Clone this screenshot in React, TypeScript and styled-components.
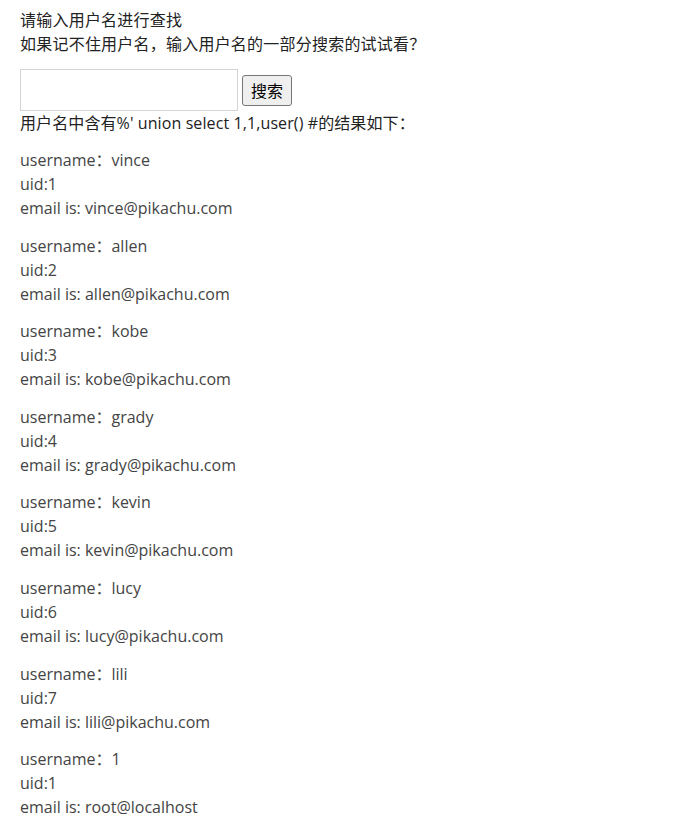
import * as React from 'react'
import styled, { createGlobalStyle } from 'styled-components'

const GlobalStyle = createGlobalStyle`
  body {
    margin: 0;
    background: #ffffff;
    font-family: 'Open Sans', 'Noto Sans CJK SC', sans-serif;
    font-size: 16px;
    line-height: 24px;
    color: #333333;
  }
`

const Page = styled.div`
  padding: 8px 20px 0;
`

const Title = styled.p`
  margin: 0;
  font-weight: 400;
  letter-spacing: 0.22px;
  color: #222222;
`

const SearchForm = styled.form`
  display: flex;
  align-items: center;
  gap: 4px;
  margin-top: 13px;
`

const SearchInput = styled.input`
  box-sizing: border-box;
  width: 218px;
  height: 42px;
  border: 1px solid #d4d4d4;
  padding: 0 8px;
  font-size: 16px;
  outline: none;
`

const SearchButton = styled.button`
  box-sizing: border-box;
  height: 31px;
  padding: 0 8px;
  border: 1px solid #767676;
  border-radius: 3px;
  background: #efefef;
  color: #000000;
  font-family: 'Noto Sans CJK SC', sans-serif;
  font-size: 16px;
`

const ResultLine = styled.p`
  margin: 0 0 13px;
  font-weight: 400;
  letter-spacing: 0.1px;
  color: #222222;
`

const Entry = styled.div`
  margin-bottom: 13.6px;
  color: #444444;
`

const Line = styled.div``

const users = [
  { name: 'vince', uid: 1, email: 'vince@pikachu.com' },
  { name: 'allen', uid: 2, email: 'allen@pikachu.com' },
  { name: 'kobe', uid: 3, email: 'kobe@pikachu.com' },
  { name: 'grady', uid: 4, email: 'grady@pikachu.com' },
  { name: 'kevin', uid: 5, email: 'kevin@pikachu.com' },
  { name: 'lucy', uid: 6, email: 'lucy@pikachu.com' },
  { name: 'lili', uid: 7, email: 'lili@pikachu.com' },
  { name: '1', uid: 1, email: 'root@localhost' }
]

export default function App() {
  return (
    <>
      <GlobalStyle />
      <Page>
        <Title>请输入用户名进行查找</Title>
        <Title>如果记不住用户名，输入用户名的一部分搜索的试试看？</Title>
        <SearchForm onSubmit={e => e.preventDefault()}>
          <SearchInput type="text" />
          <SearchButton type="submit">搜索</SearchButton>
        </SearchForm>
        <ResultLine>用户名中含有%' union select 1,1,user() #的结果如下：</ResultLine>
        {users.map((u, i) => (
          <Entry key={i}>
            <Line>username：{u.name}</Line>
            <Line>uid:{u.uid}</Line>
            <Line>email is: {u.email}</Line>
          </Entry>
        ))}
      </Page>
    </>
  )
}
